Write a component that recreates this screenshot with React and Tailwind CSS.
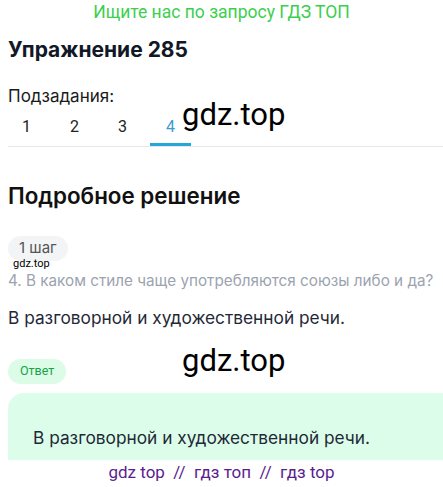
import React from 'react';

const tabs = ['1', '2', '3', '4'];

const App = () => {
  return (
    <div className="relative w-[443px] h-[487px] overflow-hidden bg-white font-['Inter',sans-serif] text-[#1a1a1a]">
      {/* Баннер */}
      <div className="text-center text-[17.5px] leading-[24px] text-[#3ccf4e] font-['Roboto',sans-serif]">
        Ищите нас по запросу ГДЗ ТОП
      </div>

      <div className="pl-2">
        <h1 className="mt-[12px] text-[21px] leading-[28px] font-bold text-[#111827]">Упражнение 285</h1>

        <div className="mt-[21px] text-[17px] leading-[22px]">Подзадания:</div>

        {/* Вкладки */}
        <div className="flex gap-[7px] border-b border-[#e5e7eb]">
          {tabs.map((t, i) => (
            <div
              key={t}
              className={`w-[41px] h-[39px] flex items-center justify-center text-[16px] font-['Roboto',sans-serif] ${
                i === 0 ? 'ml-[-2px]' : ''
              } ${t === '4' ? 'text-[#3b9ad0] border-b-[3px] border-[#22a7d8] mb-[-1px] pt-[3px]' : 'text-[#222]'}`}
            >
              {t}
            </div>
          ))}
        </div>

        <h2 className="mt-[34px] text-[22.4px] leading-[30px] font-semibold text-[#111]">Подробное решение</h2>

        <div className="mt-[25px] inline-flex items-center h-[25px] px-[11px] rounded-full bg-[#f3f4f6] text-[15px] text-[#555]">
          1 шаг
        </div>
        <div className="ml-[5px] mt-[-3px] text-[11px] leading-[12px] font-['Roboto',sans-serif] text-black">gdz.top</div>
        <div className="mt-[1px] text-[15.25px] leading-[20px] text-[#9ca3af] whitespace-nowrap">
          4. В каком стиле чаще употребляются союзы либо и да?
        </div>

        <div className="mt-[16px] text-[17.3px] leading-[22px] text-[#1f2937]">
          В разговорной и художественной речи.
        </div>

        <div className="mt-[30px] inline-flex items-center h-[25px] px-[12px] rounded-full bg-[#dcfce7] text-[12.5px] text-[#16a34a] font-['Roboto',sans-serif]">
          Ответ
        </div>

        <div className="mt-[9px] h-[67px] rounded-tl-[16px] bg-[#dbfde9] pl-[25px] pt-[34px] text-[17.3px] leading-[22px] text-[#1f2937]">
          В разговорной и художественной речи.
        </div>
      </div>

      <div className="mt-[1px] text-center text-[17px] leading-[22px] text-[#5b1d8f] font-['Roboto',sans-serif]">
        gdz top&nbsp; //&nbsp; гдз топ&nbsp; //&nbsp; гдз top
      </div>

      {/* Водяные знаки */}
      <div className="absolute left-[182px] top-[97px] text-[31px] leading-[36px] text-black font-['Roboto',sans-serif]">
        gdz.top
      </div>
      <div className="absolute left-[182px] top-[343px] text-[31px] leading-[36px] text-black font-['Roboto',sans-serif]">
        gdz.top
      </div>
    </div>
  );
};

export default App;
